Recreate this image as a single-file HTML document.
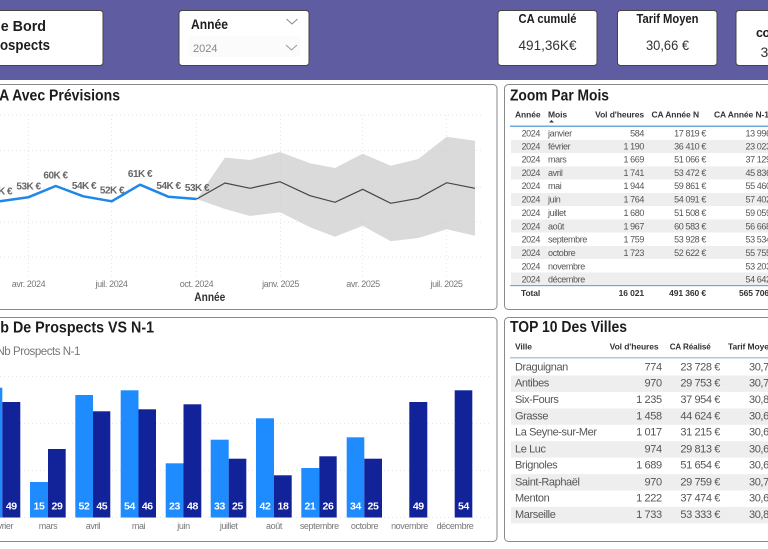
<!DOCTYPE html>
<html lang="fr"><head><meta charset="utf-8"><title>Tableau de Bord Prospects</title>
<style>
html,body{margin:0;padding:0;background:#fff;width:768px;height:549px;overflow:hidden}
svg{display:block;font-family:"Liberation Sans",sans-serif}
text{dominant-baseline:central}
.h{font-weight:700;fill:#1c1c1c}
.e{text-anchor:end}.m{text-anchor:middle}
.t text{font-size:9px;fill:#555;letter-spacing:-.4px}
.th text{font-size:8.5px;font-weight:700;fill:#333;letter-spacing:-.1px}
.v text{font-size:11px;fill:#555;letter-spacing:-.4px}
.dl text{font-size:10px;font-weight:700;fill:#666;text-anchor:middle;letter-spacing:-.5px}
.ax text{font-size:9px;fill:#777;text-anchor:middle;letter-spacing:-.4px}
.bl text{font-size:10.5px;font-weight:700;fill:#fff;text-anchor:middle;letter-spacing:-.4px}
.g line{stroke:#e6e6e6;stroke-width:1;stroke-dasharray:1 3}
</style></head><body>
<svg width="768" height="549" viewBox="0 0 768 549" xmlns="http://www.w3.org/2000/svg">
<rect x="0" y="0" width="768" height="80" fill="#5f5ca1"/>
<rect x="-10" y="10.5" width="113" height="55" rx="3" fill="#fff" stroke="#444"/>
<text class="h e" x="46" y="27" font-size="14.5" textLength="54" lengthAdjust="spacingAndGlyphs">de Bord</text>
<text class="h e" x="50" y="46" font-size="14.5" textLength="64" lengthAdjust="spacingAndGlyphs">Prospects</text>
<rect x="179" y="10.5" width="130" height="55" rx="3" fill="#fff" stroke="#444"/>
<text class="h" x="191" y="24" font-size="14" textLength="37" lengthAdjust="spacingAndGlyphs">Année</text>
<path d="M286.500 19l5.500 5 5.500-5" fill="none" stroke="#888"/>
<rect x="189" y="36" width="111" height="21" fill="#fbfbfb"/>
<text x="193" y="49" font-size="11" fill="#888">2024</text>
<path d="M286 45l5.500 5 5.500-5" fill="none" stroke="#999"/>
<rect x="498" y="10.500" width="99" height="55" rx="3" fill="#fff" stroke="#444"/>
<text class="h m" x="547.500" y="19" font-size="12.500" textLength="58" lengthAdjust="spacingAndGlyphs">CA cumulé</text>
<text class="m" x="547.500" y="45" font-size="14" fill="#333" textLength="58" lengthAdjust="spacingAndGlyphs">491,36K€</text>
<rect x="617.500" y="10.500" width="99.500" height="55" rx="3" fill="#fff" stroke="#444"/>
<text class="h m" x="667.500" y="19" font-size="12.500" textLength="62" lengthAdjust="spacingAndGlyphs">Tarif Moyen</text>
<text class="m" x="667.500" y="45" font-size="14" fill="#333" textLength="43" lengthAdjust="spacingAndGlyphs">30,66 €</text>
<rect x="736" y="10.500" width="60" height="55" rx="3" fill="#fff" stroke="#444"/>
<text class="h" x="756" y="33" font-size="12.500" letter-spacing="-.5">coût</text>
<text x="760.500" y="52" font-size="14" fill="#333">30</text>

<rect x="-8" y="84.500" width="505" height="225" rx="4" fill="#fff" stroke="#8a8a8a"/>
<rect x="504.500" y="84.500" width="300" height="225" rx="4" fill="#fff" stroke="#8a8a8a"/>
<rect x="-8" y="317.500" width="505" height="224" rx="4" fill="#fff" stroke="#8a8a8a"/>
<rect x="504.500" y="317.500" width="300" height="224" rx="4" fill="#fff" stroke="#8a8a8a"/>

<!-- line chart -->
<text class="h e" x="120" y="96" font-size="16" textLength="131" lengthAdjust="spacingAndGlyphs">CA Avec Prévisions</text>
<g class="g">
<line x1="0" x2="482" y1="115" y2="115"/><line x1="0" x2="482" y1="150.500" y2="150.500"/><line x1="0" x2="482" y1="187" y2="187"/><line x1="0" x2="482" y1="222" y2="222"/><line x1="0" x2="482" y1="257" y2="257"/>
<line x1="28.500" x2="28.500" y1="115" y2="277"/><line x1="111.500" x2="111.500" y1="115" y2="277"/><line x1="196.500" x2="196.500" y1="115" y2="277"/><line x1="280.500" x2="280.500" y1="115" y2="277"/><line x1="362.500" x2="362.500" y1="115" y2="277"/><line x1="446.500" x2="446.500" y1="115" y2="277"/>
</g>
<polygon fill="#c9c9c9" fill-opacity=".68" points="196.700,199 225,157.500 250,160 280,152 310,163.300 335,168 362.700,153.700 390.700,165.700 418.300,159 446.700,136.700 475,140.700 475,235.700 446.700,229.300 418.300,238 390.700,241.300 362.700,225.700 335,236.700 310,227.300 280,212.300 250,216 225,209"/>
<polyline fill="none" stroke="#444" stroke-width="1.200" points="196.700,199 225,183 250,188.300 280,181.700 310,195.700 335,202.300 362.700,189.300 390.700,203.300 418.300,198.300 446.700,182.700 475,188.300"/>
<polyline fill="none" stroke="#1f87e8" stroke-width="2.500" stroke-linejoin="round" points="-2,201.500 28.300,197.300 55.700,186 83.300,196.300 111.700,201.300 140,184.700 168.300,196.700 196.700,199"/>
<g class="dl">
<text x="0" y="192">54K €</text><text x="28.500" y="187">53K €</text><text x="55.500" y="176">60K €</text><text x="84" y="186.500">54K €</text><text x="112" y="191">52K €</text><text x="140" y="174.500">61K €</text><text x="168.500" y="186.500">54K €</text><text x="197" y="188.500">53K €</text>
</g>
<g class="ax">
<text x="28.500" y="284">avr. 2024</text><text x="111.500" y="284">juil. 2024</text><text x="196.500" y="284">oct. 2024</text><text x="280.500" y="284">janv. 2025</text><text x="363" y="284">avr. 2025</text><text x="446.500" y="284">juil. 2025</text>
</g>
<text class="m" x="209.800" y="298" font-size="11.500" font-weight="700" fill="#333" textLength="31" lengthAdjust="spacingAndGlyphs">Année</text>

<!-- Zoom table -->
<text class="h" x="510" y="96" font-size="16" textLength="99" lengthAdjust="spacingAndGlyphs">Zoom Par Mois</text>
<g class="th">
<text x="515" y="114.700">Année</text><text x="548" y="114.700">Mois</text><text class="e" x="644" y="114.700">Vol d'heures</text><text class="e" x="699" y="114.700">CA Année N</text><text x="714" y="114.700">CA Année N-1</text>
</g>
<path d="M549 122.500h5l-2.500-2.500z" fill="#333"/>
<rect x="510" y="125.500" width="258" height="1.500" fill="#6fa8dc"/>
<g fill="#eee">
<rect x="511" y="140" width="257" height="13"/><rect x="511" y="166.500" width="257" height="13"/><rect x="511" y="193" width="257" height="13"/><rect x="511" y="219.500" width="257" height="13"/><rect x="511" y="246" width="257" height="13"/><rect x="511" y="272.500" width="257" height="12.500"/>
</g>
<rect x="510" y="285" width="258" height="1.200" fill="#6fa8dc"/>
<g class="t">
<g class="yr"><text class="e" x="540" y="133.300">2024</text><text class="e" x="540" y="146.500">2024</text><text class="e" x="540" y="159.700">2024</text><text class="e" x="540" y="173">2024</text><text class="e" x="540" y="186">2024</text><text class="e" x="540" y="199.500">2024</text><text class="e" x="540" y="213">2024</text><text class="e" x="540" y="226.300">2024</text><text class="e" x="540" y="239.500">2024</text><text class="e" x="540" y="253">2024</text><text class="e" x="540" y="266.300">2024</text><text class="e" x="540" y="279.500">2024</text></g>
<text x="548" y="133.300">janvier</text><text x="548" y="146.500">février</text><text x="548" y="159.700">mars</text><text x="548" y="173">avril</text><text x="548" y="186">mai</text><text x="548" y="199.500">juin</text><text x="548" y="213">juillet</text><text x="548" y="226.300">août</text><text x="548" y="239.500">septembre</text><text x="548" y="253">octobre</text><text x="548" y="266.300">novembre</text><text x="548" y="279.500">décembre</text>
<text class="e" x="644" y="133.300">584</text><text class="e" x="644" y="146.500">1 190</text><text class="e" x="644" y="159.700">1 669</text><text class="e" x="644" y="173">1 741</text><text class="e" x="644" y="186">1 944</text><text class="e" x="644" y="199.500">1 764</text><text class="e" x="644" y="213">1 680</text><text class="e" x="644" y="226.300">1 967</text><text class="e" x="644" y="239.500">1 759</text><text class="e" x="644" y="253">1 723</text>
<text class="e" x="706" y="133.300">17 819 €</text><text class="e" x="706" y="146.500">36 410 €</text><text class="e" x="706" y="159.700">51 066 €</text><text class="e" x="706" y="173">53 472 €</text><text class="e" x="706" y="186">59 861 €</text><text class="e" x="706" y="199.500">54 091 €</text><text class="e" x="706" y="213">51 508 €</text><text class="e" x="706" y="226.300">60 583 €</text><text class="e" x="706" y="239.500">53 928 €</text><text class="e" x="706" y="253">52 622 €</text>
<text x="745.500" y="133.300">13 996 €</text><text x="745.500" y="146.500">23 023 €</text><text x="745.500" y="159.700">37 129 €</text><text x="745.500" y="173">45 836 €</text><text x="745.500" y="186">55 460 €</text><text x="745.500" y="199.500">57 402 €</text><text x="745.500" y="213">59 059 €</text><text x="745.500" y="226.300">56 668 €</text><text x="745.500" y="239.500">53 534 €</text><text x="745.500" y="253">55 755 €</text><text x="745.500" y="266.300">53 203 €</text><text x="745.500" y="279.500">54 642 €</text>
</g>
<g class="th">
<text x="521" y="293">Total</text><text class="e" x="644" y="293">16 021</text><text class="e" x="706" y="293">491 360 €</text><text x="739" y="293">565 706 €</text>
</g>

<!-- Bars -->
<text class="h e" x="154" y="328" font-size="16" textLength="164" lengthAdjust="spacingAndGlyphs">Nb De Prospects VS N-1</text>
<text class="e" x="80" y="352" font-size="11.500" fill="#777" letter-spacing="-.45">Nb Prospects N-1</text>
<g class="g">
<line x1="0" x2="490" y1="376.500" y2="376.500"/><line x1="0" x2="490" y1="423.500" y2="423.500"/><line x1="0" x2="490" y1="470.500" y2="470.500"/><line x1="0" x2="490" y1="517.500" y2="517.500"/>
</g>
<g fill="#1e8bff">
<rect x="-16" y="387.700" width="18.300" height="129.800"/><rect x="30" y="482" width="18" height="35.500"/><rect x="75.300" y="395" width="17.700" height="122.500"/><rect x="120.700" y="390.300" width="17.800" height="127.200"/><rect x="165.700" y="463.300" width="17.800" height="54.200"/><rect x="210.700" y="439.700" width="18" height="77.800"/><rect x="256" y="418.300" width="18" height="99.200"/><rect x="301.300" y="468" width="18" height="49.500"/><rect x="346.700" y="437.300" width="17.600" height="80.200"/>
</g>
<g fill="#122298">
<rect x="2.300" y="402" width="18" height="115.500"/><rect x="48" y="449" width="17.700" height="68.500"/><rect x="93" y="411.300" width="17.300" height="106.200"/><rect x="138.500" y="409.300" width="17.500" height="108.200"/><rect x="183.500" y="404.300" width="17.800" height="113.200"/><rect x="228.700" y="458.700" width="17.600" height="58.800"/><rect x="274" y="475.300" width="17.700" height="42.200"/><rect x="319.300" y="456.300" width="17.400" height="61.200"/><rect x="364.300" y="458.700" width="17.700" height="58.800"/><rect x="409.300" y="402" width="18" height="115.500"/><rect x="454.700" y="390.300" width="17.600" height="127.200"/>
</g>
<g class="bl">
<text x="11.300" y="506.700">49</text><text x="39" y="506.700">15</text><text x="57" y="506.700">29</text><text x="84" y="506.700">52</text><text x="101.800" y="506.700">45</text><text x="129.500" y="506.700">54</text><text x="147.300" y="506.700">46</text><text x="174.500" y="506.700">23</text><text x="192.500" y="506.700">48</text><text x="219.500" y="506.700">33</text><text x="237.500" y="506.700">25</text><text x="265" y="506.700">42</text><text x="283" y="506.700">18</text><text x="310" y="506.700">21</text><text x="328" y="506.700">26</text><text x="355.500" y="506.700">34</text><text x="373" y="506.700">25</text><text x="418.300" y="506.700">49</text><text x="463.500" y="506.700">54</text>
</g>
<g class="ax">
<text x="2" y="526">février</text><text x="48" y="526">mars</text><text x="93" y="526">avril</text><text x="138.500" y="526">mai</text><text x="183.500" y="526">juin</text><text x="228.700" y="526">juillet</text><text x="274" y="526">août</text><text x="319.300" y="526">septembre</text><text x="364.500" y="526">octobre</text><text x="409.500" y="526">novembre</text><text x="455" y="526">décembre</text>
</g>

<!-- Villes -->
<text class="h" x="510" y="327.700" font-size="16" textLength="117" lengthAdjust="spacingAndGlyphs">TOP 10 Des Villes</text>
<g class="th">
<text x="515" y="346.300">Ville</text><text class="e" x="658.500" y="346.300">Vol d'heures</text><text class="e" x="710.700" y="346.300" textLength="41" lengthAdjust="spacingAndGlyphs">CA Réalisé</text><text x="728" y="346.300">Tarif Moyen</text>
</g>
<rect x="510" y="357" width="258" height="1.500" fill="#a9c8e6"/>
<g fill="#eee">
<rect x="511" y="375.500" width="257" height="16.400"/><rect x="511" y="408.400" width="257" height="16.400"/><rect x="511" y="441.200" width="257" height="16.400"/><rect x="511" y="474.100" width="257" height="16.400"/><rect x="511" y="507" width="257" height="16.400"/>
</g>
<g class="v">
<text x="515" y="367.300">Draguignan</text><text x="515" y="383.700">Antibes</text><text x="515" y="400">Six-Fours</text><text x="515" y="416.700">Grasse</text><text x="515" y="432.700">La Seyne-sur-Mer</text><text x="515" y="449.300">Le Luc</text><text x="515" y="465.700">Brignoles</text><text x="515" y="482.300">Saint-Raphaël</text><text x="515" y="498.700">Menton</text><text x="515" y="515">Marseille</text>
<text class="e" x="661.700" y="367.300">774</text><text class="e" x="661.700" y="383.700">970</text><text class="e" x="661.700" y="400">1 235</text><text class="e" x="661.700" y="416.700">1 458</text><text class="e" x="661.700" y="432.700">1 017</text><text class="e" x="661.700" y="449.300">974</text><text class="e" x="661.700" y="465.700">1 689</text><text class="e" x="661.700" y="482.300">970</text><text class="e" x="661.700" y="498.700">1 222</text><text class="e" x="661.700" y="515">1 733</text>
<text class="e" x="720" y="367.300">23 728 €</text><text class="e" x="720" y="383.700">29 753 €</text><text class="e" x="720" y="400">37 954 €</text><text class="e" x="720" y="416.700">44 624 €</text><text class="e" x="720" y="432.700">31 215 €</text><text class="e" x="720" y="449.300">29 813 €</text><text class="e" x="720" y="465.700">51 654 €</text><text class="e" x="720" y="482.300">29 759 €</text><text class="e" x="720" y="498.700">37 474 €</text><text class="e" x="720" y="515">53 333 €</text>
<text x="749" y="367.300">30,70 €</text><text x="749" y="383.700">30,70 €</text><text x="749" y="400">30,80 €</text><text x="749" y="416.700">30,60 €</text><text x="749" y="432.700">30,60 €</text><text x="749" y="449.300">30,60 €</text><text x="749" y="465.700">30,60 €</text><text x="749" y="482.300">30,70 €</text><text x="749" y="498.700">30,60 €</text><text x="749" y="515">30,80 €</text>
</g>
</svg>
</body></html>
